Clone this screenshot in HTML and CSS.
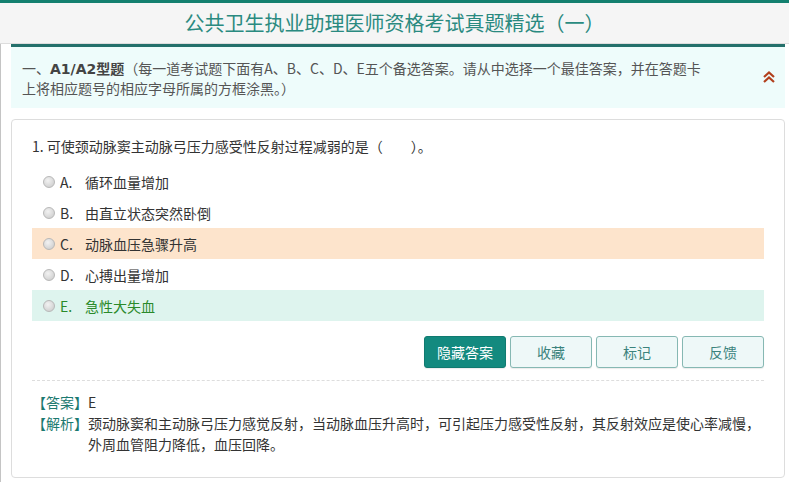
FILE: index.html
```html
<!DOCTYPE html>
<html lang="zh-CN">
<head>
    <meta charset="UTF-8">
    <meta name="viewport" content="width=device-width, initial-scale=1.0">
    <title>公共卫生执业助理医师资格考试真题精选（一）</title>
    <link rel="stylesheet" href="styles.css">
</head>
<body>

<div class="header">
    <h1>公共卫生执业助理医师资格考试真题精选（一）</h1>
</div>

<div class="main">
    <!-- 题型说明 -->
    <div class="intro">
        <p><span>一、</span><b>A1/A2型题</b><span>（每一道考试题下面有A、B、C、D、E五个备选答案。请从中选择一个最佳答案，并在答题卡上将相应题号的相应字母所属的方框涂黑。）</span></p>
        <span class="toggle">
            <svg width="14" height="14" viewBox="0 0 14 14">
                <polyline points="2,7 7,2.5 12,7" fill="none" stroke="#b2401d" stroke-width="2.2"/>
                <polyline points="2,12 7,7.5 12,12" fill="none" stroke="#b2401d" stroke-width="2.2"/>
            </svg>
        </span>
    </div>

    <!-- 题目 -->
    <div class="card">
        <p class="question">1. 可使颈动脉窦主动脉弓压力感受性反射过程减弱的是（　　）。</p>

        <ul class="options">
            <li><span class="radio"></span><span class="letter">A.</span>循环血量增加</li>
            <li><span class="radio"></span><span class="letter">B.</span>由直立状态突然卧倒</li>
            <li class="chosen"><span class="radio"></span><span class="letter">C.</span>动脉血压急骤升高</li>
            <li><span class="radio"></span><span class="letter">D.</span>心搏出量增加</li>
            <li class="right"><span class="radio"></span><span class="letter">E.</span>急性大失血</li>
        </ul>

        <div class="actions">
            <button class="primary">隐藏答案</button>
            <button>收藏</button>
            <button>标记</button>
            <button>反馈</button>
        </div>

        <div class="analysis">
            <div class="line"><span class="tag">【答案】</span><span class="txt">E</span></div>
            <div class="line"><span class="tag">【解析】</span><span class="txt">颈动脉窦和主动脉弓压力感觉反射，当动脉血压升高时，可引起压力感受性反射，其反射效应是使心率减慢，外周血管阻力降低，血压回降。</span></div>
        </div>
    </div>
</div>

</body>
</html>
```

FILE: styles.css
```css
body {
    margin: 0;
    font-family: "Noto Sans CJK SC", "Liberation Sans", sans-serif;
    font-size: 14px;
    color: #333;
    background-color: white;
}

.header {
    border-top: 3px solid #13806f;
    background-color: #f5f5f5;
    border-bottom: 1px solid #dddddd;
    height: 40px;
}

.header h1 {
    margin: 0;
    text-align: center;
    font-size: 20px;
    font-weight: normal;
    line-height: 40px;
    color: #2a8a80;
}

.main {
    border-left: 1px solid #c4c4c4;
    padding: 0 4px 4px 10px;
}

/* 题型说明 */
.intro {
    display: flex;
    align-items: center;
    justify-content: space-between;
    background-color: #eefcfb;
    border-top: 3px solid #24706b;
    padding: 11px 9px 10px 11px;
}

.intro p {
    width: 685px;
    margin: 0;
    line-height: 20px;
    color: #555;
}

.intro b {
    font-family: "DejaVu Sans", "Noto Sans CJK SC", sans-serif;
    line-height: 1;
    color: #444;
}

.toggle {
    display: flex;
    margin-top: -2px;
}

/* 题目卡片 */
.card {
    margin-top: 11px;
    border: 1px solid #dddddd;
    border-radius: 4px;
    padding: 16px 20px 22px 20px;
}

.question {
    margin: 0 0 10px 0;
    line-height: 20px;
}

.options {
    list-style: none;
    margin: 0;
    padding: 0;
}

.options li {
    display: flex;
    align-items: center;
    height: 31px;
    padding-left: 11px;
}

.options li.chosen { background-color: #fde4cc; }
.options li.right { background-color: #def4ee; color: #2a8a2a; }

.radio {
    width: 10px;
    height: 10px;
    border-radius: 50%;
    border: 1px solid #b8b8b8;
    background: radial-gradient(circle at 40% 35%, #f2f2f2, #c8c8c8);
    margin-right: 5px;
}

.letter {
    width: 25px;
}

.actions {
    display: flex;
    justify-content: flex-end;
    gap: 4px;
    margin-top: 15px;
    padding-bottom: 12px;
    border-bottom: 1px dashed #dddddd;
}

.actions button {
    width: 82px;
    height: 32px;
    font-family: inherit;
    font-size: 14px;
    color: #3b837d;
    background-color: #eef8f8;
    border: 1px solid #86b8b3;
    border-radius: 3px;
    box-shadow: 0 1px 1px rgba(0, 0, 0, 0.08);
    cursor: pointer;
}

.actions button.primary {
    background-color: #138a7f;
    border-color: #107a70;
    color: white;
}

/* 答案与解析 */
.analysis {
    padding-top: 11px;
}

.analysis .line {
    display: flex;
    line-height: 21px;
}

.tag {
    color: #1c7a70;
    flex-shrink: 0;
    width: 56px;
}

.txt {
    flex: 1;
}
```
